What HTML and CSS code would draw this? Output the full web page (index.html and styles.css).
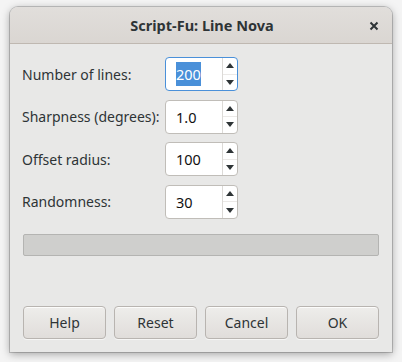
FILE: index.html
```html
<!DOCTYPE html>
<html>
<head>
<meta charset="utf-8">
<link rel="stylesheet" href="styles.css">
</head>
<body>
<div class="window">
  <div class="titlebar">
    <span class="title">Script-Fu: Line Nova</span>
    <span class="close">
      <svg width="10" height="10" viewBox="0 0 10 10"><path d="M1.5 1.5 L8.5 8.5 M8.5 1.5 L1.5 8.5" stroke="#2e3436" stroke-width="2" stroke-linecap="butt"/></svg>
    </span>
  </div>
  <div class="content">
    <div class="form">
      <label class="label">Number of lines:</label>
      <div class="spin focus">
        <div class="entry"><span class="sel">200</span></div>
        <div class="arrows">
          <span class="arr"><svg width="8" height="5" viewBox="0 0 8 5"><path d="M0 5 L4 0 L8 5 Z" fill="#2e3436"/></svg></span>
          <span class="arr"><svg width="8" height="5" viewBox="0 0 8 5"><path d="M0 0 L4 5 L8 0 Z" fill="#2e3436"/></svg></span>
        </div>
      </div>
      <label class="label">Sharpness (degrees):</label>
      <div class="spin">
        <div class="entry">1.0</div>
        <div class="arrows">
          <span class="arr"><svg width="8" height="5" viewBox="0 0 8 5"><path d="M0 5 L4 0 L8 5 Z" fill="#2e3436"/></svg></span>
          <span class="arr"><svg width="8" height="5" viewBox="0 0 8 5"><path d="M0 0 L4 5 L8 0 Z" fill="#2e3436"/></svg></span>
        </div>
      </div>
      <label class="label">Offset radius:</label>
      <div class="spin">
        <div class="entry">100</div>
        <div class="arrows">
          <span class="arr"><svg width="8" height="5" viewBox="0 0 8 5"><path d="M0 5 L4 0 L8 5 Z" fill="#2e3436"/></svg></span>
          <span class="arr"><svg width="8" height="5" viewBox="0 0 8 5"><path d="M0 0 L4 5 L8 0 Z" fill="#2e3436"/></svg></span>
        </div>
      </div>
      <label class="label">Randomness:</label>
      <div class="spin">
        <div class="entry">30</div>
        <div class="arrows">
          <span class="arr"><svg width="8" height="5" viewBox="0 0 8 5"><path d="M0 5 L4 0 L8 5 Z" fill="#2e3436"/></svg></span>
          <span class="arr"><svg width="8" height="5" viewBox="0 0 8 5"><path d="M0 0 L4 5 L8 0 Z" fill="#2e3436"/></svg></span>
        </div>
      </div>
    </div>
    <div class="progress"></div>
    <div class="spacer"></div>
    <div class="buttons">
      <button class="btn">Help</button>
      <button class="btn">Reset</button>
      <button class="btn">Cancel</button>
      <button class="btn">OK</button>
    </div>
  </div>
</div>
</body>
</html>
```

FILE: styles.css
```css
html, body {
  margin: 0;
  padding: 0;
}
body {
  width: 402px;
  height: 362px;
  background: #f4f4f4;
  font-family: "Noto Sans", "DejaVu Sans", sans-serif;
  color: #2e3436;
  overflow: hidden;
  padding-top: 7px;
  box-sizing: border-box;
}
.window {
  margin-left: 10px;
  width: 382px;
  height: 345px;
  display: flex;
  flex-direction: column;
  border-radius: 8px 8px 0 0;
  box-shadow: 0 2px 8px rgba(0,0,0,0.35), 0 0 0 1px rgba(0,0,0,0.18);
  background: #e8e8e7;
  overflow: hidden;
}
.titlebar {
  height: 36px;
  flex: none;
  background: linear-gradient(#e1dedb, #dad6d2);
  border-bottom: 1px solid #bfb8b1;
  display: flex;
  align-items: center;
  justify-content: center;
  position: relative;
}
.title {
  font-weight: bold;
  font-size: 14.5px;
  color: #2e3436;
  margin-left: 2px;
}
.close {
  position: absolute;
  right: 13px;
  top: 14px;
  width: 10px;
  height: 10px;
  display: flex;
}
.content {
  flex: 1;
  display: flex;
  flex-direction: column;
  padding: 13px 13px 13px 13px;
}
.form {
  display: grid;
  grid-template-columns: 142px 73px;
  row-gap: 8.6px;
  padding-left: -1px;
}
.label {
  font-size: 14px;
  display: flex;
  align-items: center;
  padding-left: -1px;
  margin-left: -1px;
}
.spin {
  height: 34px;
  box-sizing: border-box;
  display: flex;
  background: #ffffff;
  border: 1px solid #c0bdb8;
  border-radius: 4px;
  overflow: hidden;
}
.spin.focus {
  border: 1px solid #4a90d9;
  box-shadow: inset 0 0 0 1px #4a90d9;
  box-shadow: none;
}
.entry {
  width: 56px;
  flex: none;
  box-sizing: border-box;
  padding-left: 10px;
  display: flex;
  align-items: center;
  font-size: 14.5px;
  color: #101010;
}
.sel {
  background: #4a90d9;
  color: #ffffff;
  line-height: 24px;
}
.arrows {
  flex: 1;
  display: flex;
  flex-direction: column;
  border-left: 1px solid #dcdad7;
}
.arr {
  flex: 1;
  display: flex;
  align-items: center;
  justify-content: center;
}
.arr + .arr {
  border-top: 1px solid #ebe9e7;
}
.progress {
  margin-top: 15px;
  height: 22px;
  box-sizing: border-box;
  background: #cfcfcd;
  border: 1px solid #b4b4b2;
  border-radius: 2px;
}
.spacer {
  flex: 1;
}
.buttons {
  display: grid;
  grid-template-columns: repeat(4, 1fr);
  column-gap: 8px;
}
.btn {
  height: 33px;
  font-family: "Noto Sans", "DejaVu Sans", sans-serif;
  font-size: 14px;
  color: #2e3436;
  background: linear-gradient(#eeedeb, #e0ddda);
  border: 1px solid #b8b4b0;
  border-radius: 4px;
  box-shadow: inset 0 1px rgba(255,255,255,0.8), 0 1px rgba(255,255,255,0.6);
  padding: 0;
}
```
